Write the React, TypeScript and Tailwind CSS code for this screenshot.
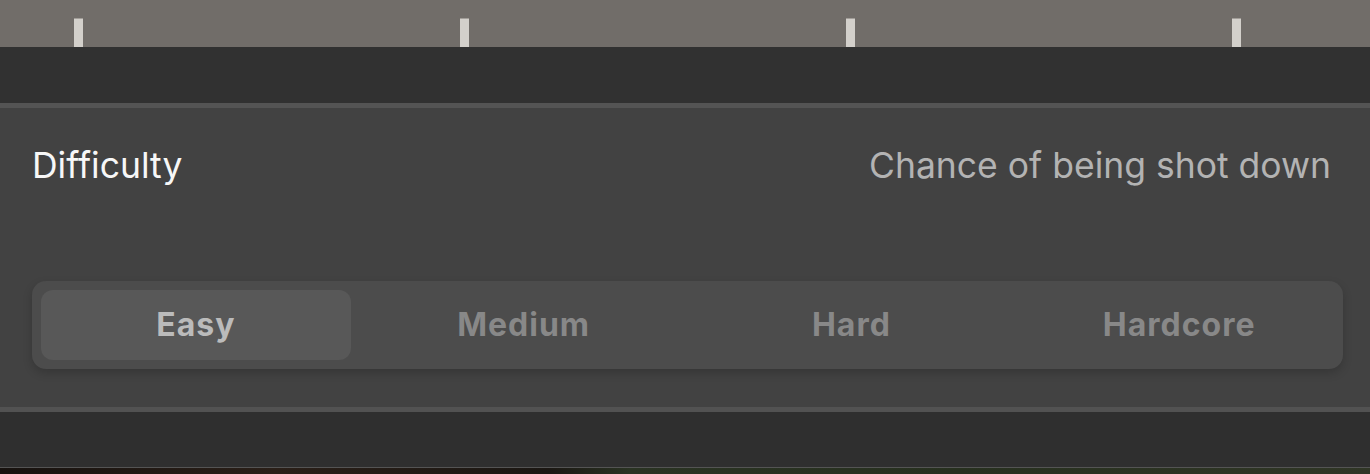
import React from "react";

const tabs = ["Easy", "Medium", "Hard", "Hardcore"];

export default function App() {
  return (
    <div className="w-[1370px] h-[474px] overflow-hidden flex flex-col bg-[#2f2f2f]" style={{ fontFamily: "Inter, 'Noto Sans', sans-serif" }}>
      {/* top ruler band */}
      <div className="h-[47px] bg-[#716d69] flex items-end pl-[74px] gap-[377px] shrink-0">
        {[0, 1, 2, 3].map((i) => (
          <div key={i} className="w-[9px] h-[29px] bg-[#d3d0cb] border-t border-[#a29e99]" />
        ))}
      </div>
      <div className="h-[56px] bg-[#313131] shrink-0" />
      <div className="h-[5px] bg-[#545454] shrink-0" />
      {/* panel */}
      <div className="h-[299px] bg-[#424242] shrink-0 px-[32px] pt-[38px] flex flex-col">
        <div className="flex justify-between items-center h-[40px] leading-[40px] text-[35.5px] pr-[7px]">
          <span className="text-[#f7f7f7]">Difficulty</span>
          <span className="text-[#b3b3b3]">Chance of being shot down</span>
        </div>
        <div className="mt-[95px] h-[88px] w-[1311px] rounded-[14px] bg-[#4c4c4c] shadow-[0_4px_10px_rgba(0,0,0,0.18)] grid grid-cols-4">
          {tabs.map((t, i) => (
            <div key={t} className="p-[9px] h-full">
              <div
                className={
                  i === 0
                    ? "h-full rounded-[12px] bg-[#585858] flex items-center justify-center text-[32px] font-bold text-[#bbbbbb] tracking-[1px]"
                    : "h-full rounded-[12px] flex items-center justify-center text-[32px] font-bold text-[#888888] tracking-[1px]"
                }
              >
                {t}
              </div>
            </div>
          ))}
        </div>
      </div>
      <div className="h-[5px] bg-[#525252] shrink-0" />
      <div className="h-[55px] bg-[#2f2f2f] shrink-0" />
      <div className="h-[1px] bg-[#545454] shrink-0" />
      <div className="h-[6px] shrink-0 bg-[linear-gradient(90deg,#17120f_0%,#2a1f18_20%,#1b1713_40%,#2a3323_46%,#27301f_70%,#303626_100%)]" />
    </div>
  );
}
